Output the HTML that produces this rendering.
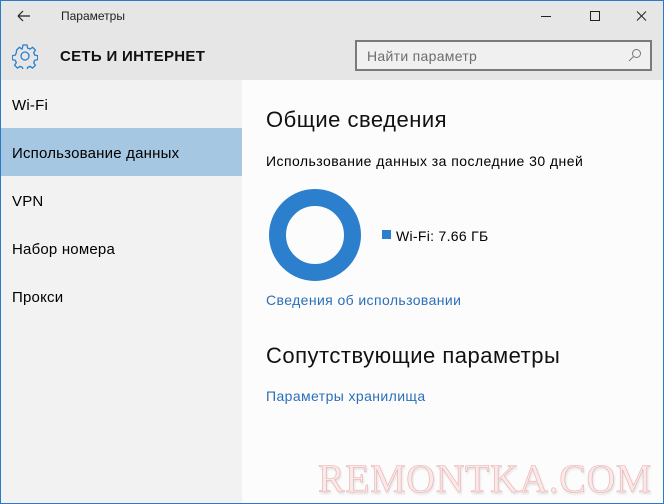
<!DOCTYPE html>
<html><head><meta charset="utf-8"><style>
*{margin:0;padding:0;box-sizing:border-box}
body{width:664px;height:504px;overflow:hidden;font-family:"Liberation Sans","DejaVu Sans",sans-serif;background:#fcfcfc;position:relative}
.frame{position:absolute;inset:0;border:1px solid #2b79c8;pointer-events:none;z-index:5}
.hdr{position:absolute;left:0;top:0;width:664px;height:80px;background:#e6e6e6}
.side{position:absolute;left:0;top:80px;width:242px;height:424px;background:#f2f2f2}
.t{position:absolute;white-space:nowrap;color:#000}
.sel{position:absolute;left:0;top:128px;width:242px;height:48px;background:#a5c7e2}
.link{color:#2a6fb8}
</style></head><body>
<div class="hdr"></div>
<div class="side"></div>
<div class="sel"></div>
<div class="frame"></div>
<svg style="position:absolute;left:17px;top:10px" width="14" height="12"><path d="M1 6H13M1 6L6 1M1 6L6 11" stroke="#222" stroke-width="1.2" fill="none"/></svg>
<div class="t" style="left:61px;top:9px;font-size:12px;color:#222">Параметры</div>
<svg style="position:absolute;left:540px;top:10px" width="110" height="14"><path d="M1 6.5H11" stroke="#222"/><rect x="50.5" y="1.5" width="9" height="9" fill="none" stroke="#222"/><path d="M97 1.5L106 10.5M106 1.5L97 10.5" stroke="#222"/></svg>
<svg style="position:absolute;left:12px;top:43px" width="26" height="26" viewBox="0 0 26 26"><g fill="none" stroke="#2b7fcc" stroke-width="1.3"><path d="M11 2h4l.6 3 2.4 1 2.6-1.7 2.8 2.8-1.7 2.6 1 2.4 3 .6v4l-3 .6-1 2.4 1.7 2.6-2.8 2.8-2.6-1.7-2.4 1-.6 3h-4l-.6-3-2.4-1-2.6 1.7-2.8-2.8 1.7-2.6-1-2.4-3-.6v-4l3-.6 1-2.4L4.6 7.1l2.8-2.8L10 6l.4-1z"/><circle cx="13" cy="13" r="4"/></g></svg>
<div class="t" style="left:60px;top:48px;font-size:15px;font-weight:bold;color:#111;letter-spacing:0.3px">СЕТЬ И ИНТЕРНЕТ</div>
<div style="position:absolute;left:355px;top:40px;width:297px;height:31px;border:2px solid #7a7a7a;background:#f0f0f0"></div>
<div class="t" style="left:367px;top:48px;font-size:14px;color:#6d6d6d;letter-spacing:0.3px">Найти параметр</div>
<svg style="position:absolute;left:628px;top:48px" width="14" height="14"><circle cx="8.5" cy="5.5" r="4" fill="none" stroke="#777"/><path d="M5.5 8.5L1 13" stroke="#777"/></svg>
<div class="t" style="left:12px;top:97px;font-size:15px;letter-spacing:0.2px">Wi-Fi</div>
<div class="t" style="left:12px;top:145px;font-size:15px;letter-spacing:0.2px">Использование данных</div>
<div class="t" style="left:12px;top:193px;font-size:15px;letter-spacing:0.2px">VPN</div>
<div class="t" style="left:12px;top:241px;font-size:15px;letter-spacing:0.2px">Набор номера</div>
<div class="t" style="left:12px;top:289px;font-size:15px;letter-spacing:0.2px">Прокси</div>
<div class="t" style="left:266px;top:107px;font-size:22px;color:#111;letter-spacing:0.5px">Общие сведения</div>
<div class="t" style="left:266px;top:153px;font-size:14px;letter-spacing:0.45px">Использование данных за последние 30 дней</div>
<svg style="position:absolute;left:268px;top:188px" width="94" height="94"><circle cx="47" cy="47" r="37.5" fill="none" stroke="#2b7fcc" stroke-width="17"/></svg>
<div style="position:absolute;left:382px;top:230px;width:9px;height:9px;background:#2b7fcc"></div>
<div class="t" style="left:396px;top:228px;font-size:14px;letter-spacing:0.3px">Wi-Fi: 7.66 ГБ</div>
<div class="t link" style="left:266px;top:292px;font-size:14px;letter-spacing:0.4px">Сведения об использовании</div>
<div class="t" style="left:266px;top:343px;font-size:22px;color:#111;letter-spacing:0.5px">Сопутствующие параметры</div>
<div class="t link" style="left:266px;top:388px;font-size:14px;letter-spacing:0.4px">Параметры хранилища</div>
<div class="t" style="left:318px;top:455px;font-size:40px;font-family:'Liberation Serif',serif;color:#fbe8e8;-webkit-text-stroke:0.6px #eab0b0;text-shadow:1px 2px 2px #ddd;letter-spacing:0.5px">REMONTKA.COM</div>
</body></html>
